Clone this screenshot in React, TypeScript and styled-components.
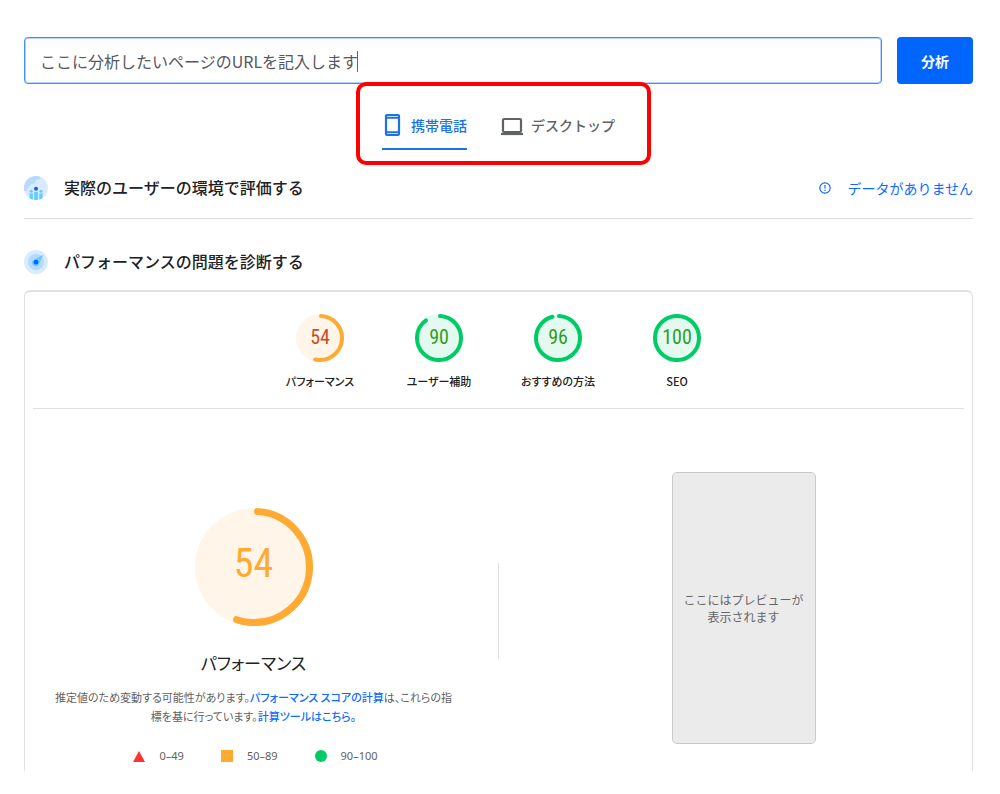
import React from "react";
import styled, { createGlobalStyle } from "styled-components";

const GlobalStyle = createGlobalStyle`
  *, *::before, *::after { box-sizing: border-box; }
  body {
    margin: 0;
    background: #fff;
    color: #202124;
    font-family: "Noto Sans CJK JP", sans-serif;
    font-size: 14px;
  }
  a { color: #0d6bff; text-decoration: none; }
`;

const Page = styled.main`
  display: flex;
  flex-direction: column;
  padding: 37px 27px 23px 24px;
`;

const SearchForm = styled.form`
  display: flex;
  gap: 15px;
  height: 47px;
`;

const Field = styled.div`
  position: relative;
  flex: 1;
  display: flex;
`;

const UrlInput = styled.input`
  width: 100%;
  border: 1px solid #3f8cff;
  border-radius: 4px;
  box-shadow: inset 0 0 0 1px #b9d6ff;
  padding: 0 15px;
  font: 400 16px "Noto Sans CJK JP", sans-serif;
  color: #55585c;
  outline: none;
`;

const Caret = styled.span`
  position: absolute;
  left: 333px;
  top: 14px;
  width: 1px;
  height: 21px;
  background: #1a6ff0;
`;

const AnalyzeButton = styled.button`
  width: 76px;
  border: 0;
  border-radius: 4px;
  background: #0066ff;
  color: #fff;
  font: 700 14px "Noto Sans CJK JP", sans-serif;
`;

const TabArea = styled.div`
  position: relative;
  display: flex;
  justify-content: center;
  margin-top: -2px;
  padding-left: 10px;
`;

const Tabs = styled.nav`
  display: flex;
  align-items: flex-start;
  gap: 34px;
  height: 83px;
  padding: 24px 32px 0 22px;
  border: 4px solid #ff0000;
  border-radius: 10px;
`;

const Tab = styled.button<{ $active?: boolean }>`
  display: flex;
  align-items: center;
  gap: 8px;
  height: 40px;
  padding: 0 0 8px;
  border: 0;
  border-bottom: 2px solid ${(p) => (p.$active ? "#1a73e8" : "transparent")};
  background: none;
  color: ${(p) => (p.$active ? "#1a73e8" : "#5f6368")};
  font: 500 14px/20px "Noto Sans CJK JP", sans-serif;
  white-space: nowrap;
`;

const SectionHead = styled.header`
  display: flex;
  align-items: center;
  gap: 16px;
  height: 24px;
`;

const SectionTitle = styled.h2`
  margin: 0;
  padding-bottom: 3px;
  font-size: 16px;
  line-height: 24px;
  font-weight: 500;
`;

const FieldSection = styled.section`
  padding: 11px 0 18px;
  border-bottom: 1px solid #dadce0;
`;

const LabSection = styled.section`
  padding-top: 31px;
`;

const NoData = styled.a`
  display: flex;
  align-items: center;
  gap: 16px;
  margin-left: auto;
  line-height: 24px;
`;

const Card = styled.div`
  margin-top: 16px;
  border: 1px solid #dfe1e5;
  border-top-width: 2px;
  border-bottom: 0;
  border-radius: 6px 6px 0 0;
`;

const Scores = styled.div`
  display: flex;
  justify-content: center;
  margin: 0 8px;
  padding: 22px 0 18px;
  border-bottom: 1px solid #e0e0e0;
`;

const Score = styled.a`
  display: flex;
  flex-direction: column;
  align-items: center;
  gap: 10px;
  width: 119px;
  color: #212121;
  font-size: 11px;
  line-height: 18px;
  font-weight: 500;
  font-feature-settings: "palt";
`;

const GaugeBox = styled.div<{ $size: number }>`
  display: grid;
  place-items: center;
  width: ${(p) => p.$size}px;
  height: ${(p) => p.$size}px;
  > * { grid-area: 1 / 1; }
`;

const GaugeValue = styled.span<{ $large?: boolean; $color: string }>`
  padding-bottom: ${(p) => (p.$large ? 6 : 2)}px;
  font-family: "Noto Sans Condensed", "Roboto Condensed", "Liberation Sans Narrow", "Noto Sans CJK JP", sans-serif;
  font-size: ${(p) => (p.$large ? 40 : 20)}px;
  line-height: 1;
  font-weight: 400;
  color: ${(p) => p.$color};
`;

const Detail = styled.div`
  display: grid;
  grid-template-columns: 1fr 1px 1fr;
  align-items: start;
  column-gap: 16px;
  padding-top: 63px;
`;

const Summary = styled.div`
  display: flex;
  flex-direction: column;
  align-items: center;
  padding-top: 36px;
`;

const SummaryTitle = styled.h3`
  margin: 22px 0 10px;
  font-size: 17px;
  line-height: 30px;
  font-weight: 400;
  font-feature-settings: "palt";
`;

const Note = styled.p`
  margin: 0;
  text-align: center;
  font-size: 11px;
  line-height: 19px;
  color: #616161;
  font-feature-settings: "palt";
  white-space: nowrap;
  a { font-weight: 500; }
`;

const Legend = styled.ul`
  display: flex;
  gap: 37px;
  margin: 21px 0 0;
  padding: 0 0 0 4px;
  list-style: none;
`;

const LegendItem = styled.li`
  display: flex;
  align-items: center;
  gap: 14px;
  font: 400 11px/18px "Noto Sans", sans-serif;
  color: #616161;
`;

const Separator = styled.div`
  height: 96px;
  margin-top: 91px;
  background: #e0e0e0;
`;

const Preview = styled.div`
  display: grid;
  place-items: center;
  justify-self: center;
  width: 144px;
  height: 272px;
  margin-bottom: 27px;
  border: 1px solid #cacaca;
  border-radius: 5px;
  background: #ebebeb;
  color: #666;
  font-size: 12px;
  line-height: 17px;
  text-align: center;
`;

type GaugeProps = {
  value: number;
  size: number;
  stroke: number;
  color: string;
  tint: string;
  text: string;
  large?: boolean;
};

function Gauge({ value, size, stroke, color, tint, text, large }: GaugeProps) {
  const r = (size - stroke) / 2;
  const c = size / 2;
  const length = 2 * Math.PI * r;
  const trim = large || value === 100 ? 0 : stroke / 2;
  const arc = (value / 100) * length - trim;
  const startAngle = ((large ? stroke / 2 : stroke / 4) / r) * (180 / Math.PI) - 90;
  return (
    <GaugeBox $size={size}>
      <svg width={size} height={size} viewBox={`0 0 ${size} ${size}`} aria-hidden="true">
        <circle cx={c} cy={c} r={c} fill={tint} />
        <circle
          cx={c}
          cy={c}
          r={r}
          fill="none"
          stroke={color}
          strokeWidth={stroke}
          strokeLinecap="round"
          strokeDasharray={`${arc} ${length}`}
          transform={`rotate(${startAngle} ${c} ${c})`}
        />
      </svg>
      <GaugeValue $large={large} $color={text}>{value}</GaugeValue>
    </GaugeBox>
  );
}

const PhoneIcon = () => (
  <svg width="21" height="24" viewBox="0 0 21 24" fill="none" stroke="currentColor" aria-hidden="true">
    <rect x="4" y="2" width="13" height="20" rx="1" strokeWidth="2.2" />
    <path d="M4 4.8h13M4 19.2h13" strokeWidth="2" />
  </svg>
);

const LaptopIcon = () => (
  <svg width="22" height="24" viewBox="0 0 22 24" fill="none" stroke="currentColor" aria-hidden="true">
    <rect x="2" y="6" width="18" height="13" rx="1" strokeWidth="2.2" />
    <path d="M0 21h22" strokeWidth="2.2" />
  </svg>
);

const UsersIcon = () => (
  <svg width="24" height="24" viewBox="0 0 24 24" aria-hidden="true">
    <clipPath id="globe"><circle cx="12" cy="12" r="12" /></clipPath>
    <g clipPath="url(#globe)">
      <rect width="24" height="24" fill="#d9ebff" />
      <path d="M0 15V0h17l-1 3-4 1-1 3-4 1-3 4-2 3z" fill="#b5d9ff" />
      <g fill="#66ccff">
        <rect x="5.5" y="17.5" width="3.4" height="7" />
        <rect x="10.1" y="16" width="3.8" height="8" />
        <rect x="15.3" y="17.5" width="3.4" height="7" />
        <circle cx="7.2" cy="15.2" r="1.5" />
        <circle cx="17" cy="15.2" r="1.5" />
      </g>
      <circle cx="12" cy="12.7" r="2" fill="#0a62ff" />
    </g>
  </svg>
);

const CompassIcon = () => (
  <svg width="24" height="24" viewBox="0 0 24 24" aria-hidden="true">
    <circle cx="12" cy="12" r="12" fill="#d9ebff" />
    <circle cx="12" cy="12" r="8" fill="#b5d9ff" />
    <path d="M19.5 4.5 9 10.2a3.6 3.6 0 1 0 5.6 4.6z" fill="#66ccff" />
    <circle cx="12" cy="12.2" r="2.4" fill="#0a62ff" />
  </svg>
);

const InfoIcon = () => (
  <svg width="12" height="12" viewBox="0 0 12 12" fill="none" stroke="currentColor" aria-hidden="true">
    <circle cx="6" cy="6" r="5.2" strokeWidth="1.2" />
    <path d="M6 3v3.6M6 7.8v1.2" strokeWidth="1.2" />
  </svg>
);

const orange = { color: "#ffaa33", tint: "#fff5e8" };
const green = { color: "#00cc66", tint: "#e4f9ef" };

const scores = [
  { label: "パフォーマンス", value: 54, text: "#cc4a1a", ...orange },
  { label: "ユーザー補助", value: 90, text: "#2f9e1f", ...green },
  { label: "おすすめの方法", value: 96, text: "#2f9e1f", ...green },
  { label: "SEO", value: 100, text: "#2f9e1f", ...green },
];

export default function App() {
  return (
    <>
      <GlobalStyle />
      <Page>
        <SearchForm onSubmit={(e) => e.preventDefault()}>
          <Field>
            <UrlInput type="text" aria-label="URL" defaultValue="ここに分析したいページのURLを記入します" />
            <Caret />
          </Field>
          <AnalyzeButton type="submit">分析</AnalyzeButton>
        </SearchForm>

        <TabArea>
          <Tabs>
            <Tab type="button" $active><PhoneIcon />携帯電話</Tab>
            <Tab type="button"><LaptopIcon />デスクトップ</Tab>
          </Tabs>
        </TabArea>

        <FieldSection>
          <SectionHead>
            <UsersIcon />
            <SectionTitle>実際のユーザーの環境で評価する</SectionTitle>
            <NoData href="#no-data"><InfoIcon />データがありません</NoData>
          </SectionHead>
        </FieldSection>

        <LabSection>
          <SectionHead>
            <CompassIcon />
            <SectionTitle>パフォーマンスの問題を診断する</SectionTitle>
          </SectionHead>
          <Card>
            <Scores>
              {scores.map((s) => (
                <Score key={s.label} href="#performance">
                  <Gauge value={s.value} size={48} stroke={4} color={s.color} tint={s.tint} text={s.text} />
                  {s.label}
                </Score>
              ))}
            </Scores>
            <Detail id="performance">
              <Summary>
                <Gauge value={54} size={118} stroke={7} color={orange.color} tint={orange.tint} text="#ffaa33" large />
                <SummaryTitle>パフォーマンス</SummaryTitle>
                <Note>
                  推定値のため変動する可能性があります。<a href="#score">パフォーマンス スコアの計算</a>は、これらの指
                  <br />
                  標を基に行っています。<a href="#calculator">計算ツールはこちら。</a>
                </Note>
                <Legend>
                  <LegendItem>
                    <svg width="12" height="12" aria-hidden="true"><path d="M6 1l6 11H0z" fill="#ff3333" /></svg>
                    0–49
                  </LegendItem>
                  <LegendItem>
                    <svg width="12" height="12" aria-hidden="true"><rect width="12" height="12" fill="#ffaa33" /></svg>
                    50–89
                  </LegendItem>
                  <LegendItem>
                    <svg width="12" height="12" aria-hidden="true"><circle cx="6" cy="6" r="6" fill="#00cc66" /></svg>
                    90–100
                  </LegendItem>
                </Legend>
              </Summary>
              <Separator />
              <Preview>
                <span>ここにはプレビューが<br />表示されます</span>
              </Preview>
            </Detail>
          </Card>
        </LabSection>
      </Page>
    </>
  );
}
